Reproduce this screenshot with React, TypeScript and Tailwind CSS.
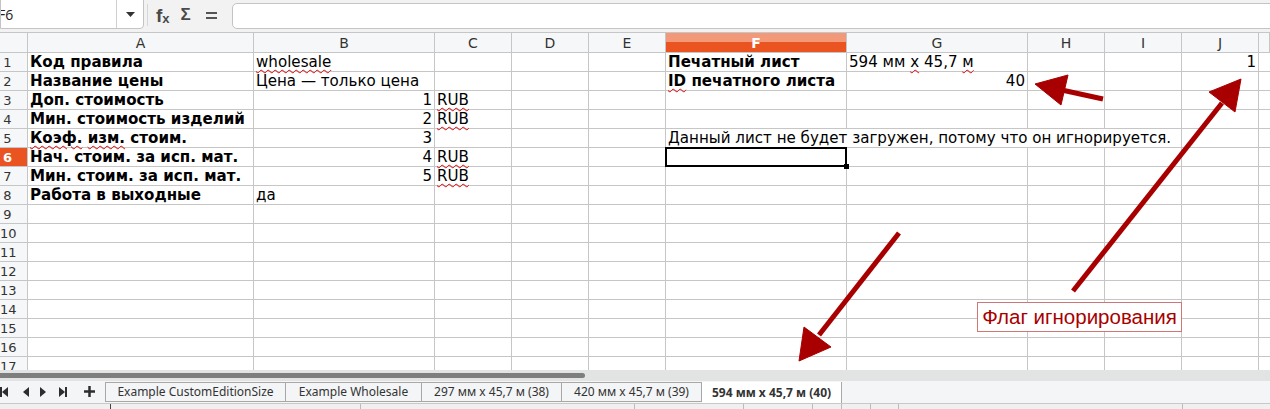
import React from "react";

const sq = "underline decoration-wavy decoration-[#e00000] decoration-1 underline-offset-[2px]";
const cellBase = "border-r border-b border-[#c6c6c6] h-[19px] leading-[19px] whitespace-nowrap overflow-visible px-[2px]";

function C({ children, right, bold, className = "" }: { children?: React.ReactNode; right?: boolean; bold?: boolean; className?: string }) {
  return (
    <div className={`${cellBase} ${right ? "text-right" : "text-left"} ${bold ? "font-bold" : ""} ${className}`}>
      {children}
    </div>
  );
}

function RowHead({ n, active }: { n: number; active?: boolean }) {
  return (
    <div
      className={`border-r border-b border-[#c6c6c6] h-[19px] leading-[19px] text-[13px] ${
        active ? "bg-[#e95420] text-white font-bold" : "bg-[#f6f7f8] text-[#333]"
      }`}
    >
      <div className="w-[15px] text-center">{n}</div>
    </div>
  );
}

const letters = ["A", "B", "C", "D", "E", "F", "G", "H", "I", "J", ""];

function Tri({ dir }: { dir: "l" | "r" }) {
  return (
    <svg width="6" height="10" viewBox="0 0 6 10">
      {dir === "l" ? <polygon points="6,0 6,10 0,5" fill="#2e2e2e" /> : <polygon points="0,0 0,10 6,5" fill="#2e2e2e" />}
    </svg>
  );
}

export default function App() {
  const emptyRows = [9, 10, 11, 12, 13, 14, 15, 16, 17];
  return (
    <div className="relative w-[1270px] h-[409px] overflow-hidden bg-white font-['DejaVu_Sans',sans-serif] text-[15.1px] text-black">
      {/* Toolbar */}
      <div className="h-[32px] flex items-start bg-[#f2f2f2]">
        <div className="h-[30px] -mt-[1px] w-[144px] border border-[#c4c4c4] rounded-br-[4px] bg-white flex">
          <div className="w-[115px] h-full flex items-center overflow-hidden text-[14px] text-[#222] font-['Open_Sans',sans-serif]">
            <span className="-ml-[3px]">F6</span>
          </div>
          <div className="flex-1 border-l border-[#d0d0d0] flex items-center justify-center">
            <svg width="9" height="5" viewBox="0 0 9 5">
              <polygon points="0,0 9,0 4.5,5" fill="#333" />
            </svg>
          </div>
        </div>
        <div className="ml-[3px] mt-[4px] w-px h-[22px] bg-[#d6d6d6]" />
        <div className="ml-[8px] mt-[4px] h-[22px] flex items-center font-['Liberation_Sans',sans-serif] text-[#4a4a4a]">
          <span className="font-bold text-[19px] leading-none">f</span>
          <span className="font-bold text-[13px] leading-none mt-[6px]">x</span>
        </div>
        <div className="ml-[11px] mt-[4px] h-[22px] flex items-center font-bold text-[17px] text-[#4a4a4a] font-['Liberation_Sans',sans-serif]">Σ</div>
        <div className="ml-[15px] mt-[4px] h-[22px] flex items-center">
          <svg width="11" height="9" viewBox="0 0 11 9">
            <rect x="0" y="1" width="11" height="2" fill="#555" />
            <rect x="0" y="6" width="11" height="2" fill="#555" />
          </svg>
        </div>
        <div className="ml-[15px] mt-[3px] flex-1 h-[26px] border border-[#c4c4c4] rounded-l-[5px] bg-white -mr-[4px]" />
      </div>

      {/* Grid */}
      <div className="h-[338px] overflow-hidden border-t border-[#c6c6c6]">
        <div className="grid grid-cols-[28px_226px_181px_77px_77px_77px_181px_181px_77px_77px_77px_1fr]">
          {/* header row */}
          <div className="h-[20px] border-r border-b border-[#c6c6c6] bg-[#f6f7f8]" />
          {letters.map((l, i) =>
            l === "F" ? (
              <div
                key={i}
                className="h-[20px] leading-[20px] text-center border-r border-b border-[#c6c6c6] bg-[linear-gradient(to_bottom,#f2997a_45%,#e95420_45%)] text-white font-bold text-[14px]"
              >
                {l}
              </div>
            ) : (
              <div key={i} className="h-[20px] leading-[20px] text-center border-r border-b border-[#c6c6c6] bg-[#f6f7f8] text-[#333] text-[14px]">
                {l}
              </div>
            )
          )}

          {/* row 1 */}
          <RowHead n={1} />
          <C bold>Код правила</C>
          <C><span className={sq}>wholesale</span></C>
          <C /><C /><C />
          <C bold>Печатный лист</C>
          <C>594 мм <span className={sq}>x</span> 45,7 <span className={sq}>м</span></C>
          <C /><C />
          <C right>1</C>
          <C className="border-r-0" />

          {/* row 2 */}
          <RowHead n={2} />
          <C bold>Название цены</C>
          <C>Цена — только цена</C>
          <C /><C /><C />
          <C bold><span className={sq}>ID</span> печатного листа</C>
          <C right>40</C>
          <C /><C /><C />
          <C className="border-r-0" />

          {/* row 3 */}
          <RowHead n={3} />
          <C bold>Доп. стоимость</C>
          <C right>1</C>
          <C><span className={sq}>RUB</span></C>
          <C /><C /><C /><C /><C /><C /><C />
          <C className="border-r-0" />

          {/* row 4 */}
          <RowHead n={4} />
          <C bold>Мин. стоимость изделий</C>
          <C right>2</C>
          <C><span className={sq}>RUB</span></C>
          <C /><C /><C /><C /><C /><C /><C />
          <C className="border-r-0" />

          {/* row 5 */}
          <RowHead n={5} />
          <C bold><span className={sq}>Коэф.</span> <span className={sq}>изм.</span> стоим.</C>
          <C right>3</C>
          <C /><C /><C />
          <C className="col-span-4">Данный лист не будет загружен, потому что он игнорируется.</C>
          <C />
          <C className="border-r-0" />

          {/* row 6 */}
          <RowHead n={6} active />
          <C bold>Нач. стоим. за исп. мат.</C>
          <C right>4</C>
          <C><span className={sq}>RUB</span></C>
          <C /><C />
          <div className={`${cellBase} relative`}>
            <div className="absolute -left-[1px] -top-[1px] right-[-1px] bottom-[-1px] border-2 border-black" />
            <div className="absolute -right-[3px] -bottom-[3px] w-[5px] h-[5px] bg-black" />
          </div>
          <C /><C /><C /><C />
          <C className="border-r-0" />

          {/* row 7 */}
          <RowHead n={7} />
          <C bold>Мин. стоим. за исп. мат.</C>
          <C right>5</C>
          <C><span className={sq}>RUB</span></C>
          <C /><C /><C /><C /><C /><C /><C />
          <C className="border-r-0" />

          {/* row 8 */}
          <RowHead n={8} />
          <C bold>Работа в выходные</C>
          <C>да</C>
          <C /><C /><C /><C /><C /><C /><C /><C />
          <C className="border-r-0" />

          {emptyRows.map((n) => (
            <React.Fragment key={n}>
              <RowHead n={n} />
              <C /><C /><C /><C /><C /><C /><C /><C /><C /><C />
              <C className="border-r-0" />
            </React.Fragment>
          ))}
        </div>
      </div>

      {/* horizontal scrollbar */}
      <div className="h-[11px] bg-[#e2e3e3] pt-[3px]">
        <div className="w-[585px] h-[5px] bg-[#7e7e7e] rounded-r-[3px]" />
      </div>

      {/* Tab bar */}
      <div className="h-[22px] bg-[#f4f5f6] flex items-start font-['Noto_Sans',sans-serif] text-[12px] text-[#333]">
        <div className="w-[105px] h-[21px] flex items-center">
          <div className="ml-[0px] flex items-center">
            <div className="w-[2px] h-[10px] bg-[#2e2e2e]" />
            <Tri dir="l" />
          </div>
          <div className="ml-[15px]"><Tri dir="l" /></div>
          <div className="ml-[11px]"><Tri dir="r" /></div>
          <div className="ml-[13px] flex items-center">
            <Tri dir="r" />
            <div className="w-[2px] h-[10px] bg-[#2e2e2e]" />
          </div>
          <div className="ml-[17px]">
            <svg width="11" height="11" viewBox="0 0 11 11">
              <rect x="4.25" y="0" width="2.5" height="11" fill="#2e2e2e" />
              <rect x="0" y="4.25" width="11" height="2.5" fill="#2e2e2e" />
            </svg>
          </div>
        </div>
        <div className="mt-[1px] w-[181px] h-[20px] border border-[#a8a8a8] flex items-center justify-center">Example CustomEditionSize</div>
        <div className="mt-[1px] w-[136px] h-[20px] border-y border-r border-[#a8a8a8] flex items-center justify-center">Example Wholesale</div>
        <div className="mt-[1px] w-[140px] h-[20px] border-y border-r border-[#a8a8a8] flex items-center justify-center">297 мм x 45,7 м (38)</div>
        <div className="mt-[1px] w-[140px] h-[20px] border-y border-r border-[#a8a8a8] flex items-center justify-center">420 мм x 45,7 м (39)</div>
        <div className="mt-[1px] w-[140px] h-[21px] border-r border-[#a8a8a8] bg-white flex items-center justify-center font-bold">594 мм x 45,7 м (40)</div>
      </div>

      {/* status strip */}
      <div className="h-[6px] bg-[#f0f0f0] border-t border-[#c8c8c8] flex">
        <div className="w-[110px]" />
        <div className="w-[250px] border-l border-[#444]" />
        <div className="w-[274px] border-l border-[#bbb]" />
        <div className="w-[109px] border-l border-[#bbb]" />
        <div className="w-[69px] border-l border-[#bbb]" />
        <div className="w-[29px] border-l border-[#bbb]" />
        <div className="w-[29px] border-l border-[#bbb]" />
        <div className="w-[28px] border-l border-[#bbb]" />
        <div className="w-[284px] border-l border-[#bbb]" />
        <div className="flex-1 border-l border-[#bbb]" />
      </div>

      {/* Drawing objects */}
      <svg className="absolute inset-0 pointer-events-none" width="1270" height="409" viewBox="0 0 1270 409">
        <g fill="#a80000" stroke="#a80000">
          <line x1="1103" y1="99" x2="1064" y2="90.5" strokeWidth="5" />
          <polygon points="1035,84 1068,75 1061,105" strokeWidth="1" />
          <line x1="1073" y1="291" x2="1222" y2="103" strokeWidth="5" />
          <polygon points="1241,79 1235,112 1209,92" strokeWidth="1" />
          <line x1="899" y1="233" x2="819" y2="335" strokeWidth="5" />
          <polygon points="799,361 831,347 804,327" strokeWidth="1" />
        </g>
      </svg>
      <div className="absolute left-[977px] top-[302px] w-[205px] h-[30px] border border-[#d07676] bg-white flex items-center justify-center font-['Liberation_Sans',sans-serif] text-[20.5px] text-[#a80000]">
        Флаг игнорирования
      </div>
    </div>
  );
}
